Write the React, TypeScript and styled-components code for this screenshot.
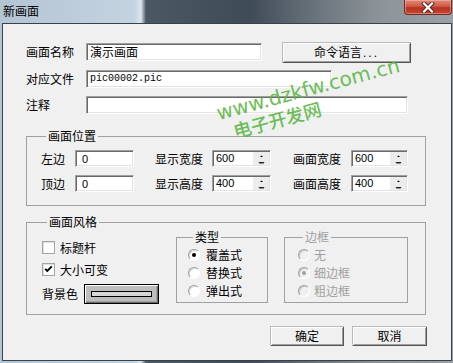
import React from "react";
import styled, { createGlobalStyle } from "styled-components";

const CJK = `"Noto Sans CJK SC", "Liberation Sans", sans-serif`;

const Global = createGlobalStyle`
  html, body { margin: 0; padding: 0; background: #fff; }
  body { font-family: ${CJK}; }
  * { box-sizing: border-box; }
`;

const Window = styled.div`
  position: relative;
  width: 453px;
  height: 363px;
  padding: 0 1px 2px 2px;
  display: flex;
  flex-direction: column;
  overflow: hidden;
  background: linear-gradient(
    90deg,
    #b3c4d3 0px,
    #c4d3e0 134px,
    #dbe5ee 141px,
    #4b5864 146px,
    #3f4b57 250px,
    #6c767e 320px,
    #8d9499 380px,
    #9aa0a5 453px
  );
`;

const TitleBar = styled.div`
  height: 23px;
  display: flex;
  justify-content: space-between;
  align-items: flex-start;
`;

const Title = styled.div`
  padding: 3px 0 0 1px;
  font: 12px/15px ${CJK};
  color: #000;
`;

const CloseButton = styled.div`
  width: 48px;
  height: 15px;
  display: flex;
  align-items: center;
  justify-content: center;
  border: 1px solid #6b2a22;
  border-top: none;
  border-radius: 0 0 4px 4px;
  background: linear-gradient(180deg, #e0897a 0%, #cf5a48 45%, #b8321f 55%, #c9452f 100%);
  box-shadow: inset 0 0 0 1px rgba(255, 200, 190, 0.45);
`;

const Client = styled.div`
  flex: 1;
  border: 1px solid #37424d;
  background: #f0f0f0;
  padding: 18px 24px 0 23px;
  font: 12px/14px ${CJK};
  color: #000;
  display: flex;
  flex-direction: column;
`;

const TopForm = styled.div`
  display: grid;
  grid-template-columns: 60px auto;
  grid-template-rows: 20px 18px 18px;
  row-gap: 8px;
  align-items: center;
`;

const FieldLine = styled.div`
  display: flex;
  align-items: center;
  gap: 20px;
  height: 100%;
`;

const Label = styled.span<{ $indent?: number; $w?: number }>`
  display: inline-block;
  padding-left: ${(p) => p.$indent ?? 0}px;
  width: ${(p) => (p.$w ? `${p.$w}px` : "auto")};
  white-space: nowrap;
  font: 12px/14px ${CJK};
`;

const sunken = `
  background: #fff;
  border-top: 1px solid #a0a0a0;
  border-left: 1px solid #a0a0a0;
  border-bottom: 1px solid #fff;
  border-right: 1px solid #fff;
  box-shadow: inset 1px 1px 0 #696969, inset -1px -1px 0 #e3e3e3;
`;

const TextBox = styled.div<{ $w: number; $mono?: boolean }>`
  ${sunken}
  width: ${(p) => p.$w}px;
  height: 18px;
  padding: 0 3px;
  display: flex;
  align-items: center;
  white-space: nowrap;
  font: ${(p) => (p.$mono ? `10px/14px "Liberation Mono", monospace` : `12px/14px ${CJK}`)};
`;

const PushButton = styled.button<{ $w: number; $h: number }>`
  width: ${(p) => p.$w}px;
  height: ${(p) => p.$h}px;
  margin: 0;
  padding: 0;
  border: none;
  background: #f0f0f0;
  color: #000;
  font: 12px/14px ${CJK};
  box-shadow: inset 1px 1px 0 #b9b9b9, inset -1px -1px 0 #555, inset 2px 2px 0 #fff,
    inset -2px -2px 0 #a0a0a0;
`;

const Dots = styled.span`
  letter-spacing: 2px;
  font: 12px/14px "Liberation Sans", sans-serif;
  margin-left: 1px;
`;

const Group = styled.fieldset<{ $w: number; $mt: number; $pad: string; $disabled?: boolean }>`
  width: ${(p) => p.$w}px;
  margin: ${(p) => p.$mt}px 0 0 0;
  padding: ${(p) => p.$pad};
  border: 1px solid #a0a0a0;
  min-width: 0;
  color: ${(p) => (p.$disabled ? "#a0a0a0" : "#000")};
`;

const Legend = styled.legend`
  margin-left: 5px;
  padding: 0 2px;
  font: 12px/14px ${CJK};
`;

const PosGrid = styled.div`
  display: grid;
  grid-template-columns: 34px 59px 78px 59px 80px 57px;
  grid-template-rows: 17px 17px;
  row-gap: 8px;
  align-items: center;
`;

const Spin = styled.div<{ $w: number }>`
  ${sunken}
  width: ${(p) => p.$w}px;
  height: 17px;
  display: flex;
`;

const SpinValue = styled.div`
  flex: 1;
  padding: 1px 0 0 3px;
  font: 11px/13px "Liberation Sans", Arial, sans-serif;
`;

const SpinButtons = styled.div`
  width: 17px;
  margin: 1px 1px 1px 0;
  background: #ececec;
  border-left: 1px solid #fff;
  display: flex;
  align-items: center;
  justify-content: center;
`;

const StyleBody = styled.div`
  display: flex;
  align-items: flex-start;
`;

const LeftCol = styled.div`
  width: 117px;
  padding-top: 12px;
  display: flex;
  flex-direction: column;
`;

const CheckRow = styled.div<{ $mt: number }>`
  display: flex;
  align-items: center;
  gap: 5px;
  height: 13px;
  margin-top: ${(p) => p.$mt}px;
`;

const CheckBox = styled.span`
  width: 13px;
  height: 13px;
  background: #fff;
  border: 1px solid #a3a3a3;
  box-shadow: inset 1px 1px 0 #e0e0e0;
  display: flex;
  align-items: center;
  justify-content: center;
`;

const ColorRow = styled.div`
  display: flex;
  align-items: center;
  height: 20px;
  margin-top: 8px;
`;

const ColorButton = styled.div`
  width: 75px;
  height: 20px;
  border: 1px solid #000;
  background: #bdbdbd;
  box-shadow: inset 1px 1px 0 #fff, inset -1px -1px 0 #696969, inset -2px -2px 0 #a0a0a0;
  display: flex;
  align-items: center;
  justify-content: center;
  padding-bottom: 1px;
`;

const Swatch = styled.div`
  width: 61px;
  height: 6px;
  border: 1px solid #000;
  background: #d6d6d6;
`;

const RadioList = styled.div`
  display: flex;
  flex-direction: column;
  gap: 1px;
`;

const RadioRow = styled.div<{ $gap: number }>`
  display: flex;
  align-items: center;
  gap: ${(p) => p.$gap}px;
  height: 17px;
`;

const RadioCircle = styled.span<{ $disabled?: boolean }>`
  width: 12px;
  height: 12px;
  border-radius: 50%;
  border: 1px solid;
  border-color: #a0a0a0 #fff #fff #a0a0a0;
  background: ${(p) => (p.$disabled ? "#f0f0f0" : "#fff")};
  box-shadow: inset 1px 1px 0 ${(p) => (p.$disabled ? "#c8c8c8" : "#d8d8d8")};
  display: flex;
  align-items: center;
  justify-content: center;
`;

const RadioDot = styled.span<{ $disabled?: boolean }>`
  width: 4px;
  height: 4px;
  border-radius: 50%;
  background: ${(p) => (p.$disabled ? "#a0a0a0" : "#000")};
`;

const ButtonRow = styled.div`
  display: flex;
  justify-content: flex-end;
  gap: 8px;
  margin-top: 11px;
`;

const Watermark = styled.div<{ $x: number; $y: number; $size: number; $cjk?: boolean }>`
  position: absolute;
  left: ${(p) => p.$x}px;
  top: ${(p) => p.$y}px;
  transform: translate(-50%, -50%) rotate(-15deg);
  white-space: nowrap;
  color: #5cb846;
  opacity: 0.9;
  font: ${(p) =>
    p.$cjk
      ? `500 ${p.$size}px/1 ${CJK}`
      : `${p.$size}px/1 "DejaVu Sans", Verdana, sans-serif`};
  pointer-events: none;
`;

const Radio = ({ label, checked, disabled, gap }: { label: string; checked?: boolean; disabled?: boolean; gap: number }) => (
  <RadioRow $gap={gap}>
    <RadioCircle $disabled={disabled}>{checked && <RadioDot $disabled={disabled} />}</RadioCircle>
    <span>{label}</span>
  </RadioRow>
);

const SpinBox = ({ value, w }: { value: string; w: number }) => (
  <Spin $w={w}>
    <SpinValue>{value}</SpinValue>
    <SpinButtons>
      <svg width="11" height="13" viewBox="0 0 11 13">
        <polygon points="4,5 5.5,3.5 7,5" fill="#000" />
        <polygon points="2.5,10 8.5,10 7.5,11.5 3.5,11.5" fill="#222" />
      </svg>
    </SpinButtons>
  </Spin>
);

export default function App() {
  return (
    <>
      <Global />
      <Window>
        <TitleBar>
          <Title>新画面</Title>
          <CloseButton>
            <svg width="16" height="11" viewBox="0 0 16 11">
              <path d="M4 1.5 L12 9.5 M12 1.5 L4 9.5" stroke="#4a2420" strokeWidth="4" strokeLinecap="square" />
              <path d="M4 1.5 L12 9.5 M12 1.5 L4 9.5" stroke="#fff" strokeWidth="2.2" strokeLinecap="square" />
            </svg>
          </CloseButton>
        </TitleBar>
        <Client>
          <TopForm>
            <Label>画面名称</Label>
            <FieldLine>
              <TextBox $w={176}>演示画面</TextBox>
              <PushButton $w={129} $h={21}>
                命令语言<Dots>...</Dots>
              </PushButton>
            </FieldLine>
            <Label>对应文件</Label>
            <FieldLine>
              <TextBox $w={246} $mono>
                pic00002.pic
              </TextBox>
            </FieldLine>
            <Label>注释</Label>
            <FieldLine>
              <TextBox $w={322} />
            </FieldLine>
          </TopForm>

          <Group $w={400} $mt={15} $pad="7px 0 13px 14px">
            <Legend>画面位置</Legend>
            <PosGrid>
              <Label>左边</Label>
              <TextBox $w={59} style={{ height: 17 }}>
                <SpinValue>0</SpinValue>
              </TextBox>
              <Label $indent={21}>显示宽度</Label>
              <SpinBox value="600" w={59} />
              <Label $indent={22}>画面宽度</Label>
              <SpinBox value="600" w={57} />
              <Label>顶边</Label>
              <TextBox $w={59} style={{ height: 17 }}>
                <SpinValue>0</SpinValue>
              </TextBox>
              <Label $indent={21}>显示高度</Label>
              <SpinBox value="400" w={59} />
              <Label $indent={22}>画面高度</Label>
              <SpinBox value="400" w={57} />
            </PosGrid>
          </Group>

          <Group $w={400} $mt={9} $pad="0 0 10px 15px">
            <Legend>画面风格</Legend>
            <StyleBody>
              <LeftCol>
                <CheckRow $mt={0}>
                  <CheckBox />
                  <span>标题杆</span>
                </CheckRow>
                <CheckRow $mt={9}>
                  <CheckBox>
                    <svg width="9" height="9" viewBox="0 0 9 9">
                      <polyline points="1.2,3.8 3.3,6 7.8,1.4" fill="none" stroke="#000" strokeWidth="1.9" />
                    </svg>
                  </CheckBox>
                  <span>大小可变</span>
                </CheckRow>
                <ColorRow>
                  <Label $w={42}>背景色</Label>
                  <ColorButton>
                    <Swatch />
                  </ColorButton>
                </ColorRow>
              </LeftCol>
              <div style={{ marginLeft: 17 }}>
                <Group $w={92} $mt={1} $pad="2px 0 3px 11px">
                  <Legend>类型</Legend>
                  <RadioList>
                    <Radio label="覆盖式" checked gap={6} />
                    <Radio label="替换式" gap={6} />
                    <Radio label="弹出式" gap={6} />
                  </RadioList>
                </Group>
              </div>
              <div style={{ marginLeft: 16 }}>
                <Group $w={124} $mt={1} $pad="2px 0 3px 13px" $disabled>
                  <Legend>边框</Legend>
                  <RadioList>
                    <Radio label="无" disabled gap={4} />
                    <Radio label="细边框" checked disabled gap={4} />
                    <Radio label="粗边框" disabled gap={4} />
                  </RadioList>
                </Group>
              </div>
            </StyleBody>
          </Group>

          <ButtonRow>
            <PushButton $w={74} $h={20}>确定</PushButton>
            <PushButton $w={75} $h={20}>取消</PushButton>
          </ButtonRow>
        </Client>
        <Watermark $x={308} $y={89} $size={20}>
          www.dzkfw.com.cn
        </Watermark>
        <Watermark $x={277} $y={119} $size={18} $cjk>
          电子开发网
        </Watermark>
      </Window>
    </>
  );
}
